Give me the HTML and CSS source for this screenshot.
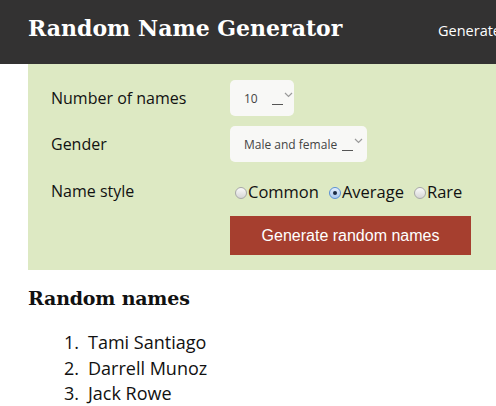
FILE: index.html
```html
<!DOCTYPE html>
<html>
<head>
<meta charset="utf-8">
<link rel="stylesheet" href="styles.css">
</head>
<body>
<header class="topbar">
  <div class="brand">Random Name Generator</div>
  <nav class="nav">Generate</nav>
</header>
<main class="content">
  <section class="panel">
    <div class="form">
      <div class="label">Number of names</div>
      <div class="field">
        <div class="select select-small"><span class="sel-text">10</span><span class="arrow"><span class="bar"></span><svg class="chev" width="9" height="6" viewBox="0 0 9 6"><path d="M1 1 L4.5 4.5 L8 1" fill="none" stroke="#9a9a9a" stroke-width="1.2"/></svg></span></div>
      </div>
      <div class="label">Gender</div>
      <div class="field">
        <div class="select select-wide"><span class="sel-text">Male and female</span><span class="arrow"><span class="bar"></span><svg class="chev" width="9" height="6" viewBox="0 0 9 6"><path d="M1 1 L4.5 4.5 L8 1" fill="none" stroke="#9a9a9a" stroke-width="1.2"/></svg></span></div>
      </div>
      <div class="label label-radio">Name style</div>
      <div class="field field-radio">
        <label class="radio"><span class="dot"></span>Common</label>
        <label class="radio"><span class="dot checked"></span>Average</label>
        <label class="radio"><span class="dot"></span>Rare</label>
      </div>
      <div></div>
      <div class="field"><button class="btn">Generate random names</button></div>
    </div>
  </section>
  <h2 class="results-title">Random names</h2>
  <ol class="names">
    <li>Tami Santiago</li>
    <li>Darrell Munoz</li>
    <li>Jack Rowe</li>
  </ol>
</main>
</body>
</html>
```
FILE: styles.css
```css
html, body { margin: 0; padding: 0; }
body {
  background: #fff;
  font-family: "Open Sans", "DejaVu Sans", sans-serif;
  color: #111;
  overflow: hidden;
  width: 496px;
}
.topbar {
  height: 64px;
  background: #333232;
  display: flex;
  align-items: center;
  padding-left: 28px;
  white-space: nowrap;
}
.brand {
  font-family: "DejaVu Serif", serif;
  font-weight: bold;
  font-size: 22px;
  color: #fff;
  letter-spacing: 0;
  width: 410px;
  flex-shrink: 0;
  margin-top: -9px;
}
.nav {
  font-family: "Open Sans", sans-serif;
  font-size: 14.5px;
  color: #fff;
  margin-top: -4px;
  flex-shrink: 0;
}
.content {
  padding-left: 28px;
}
.panel {
  background: #dde9c3;
  width: 520px;
  padding: 16px 0 15px 23px;
  box-sizing: border-box;
}
.form {
  display: grid;
  grid-template-columns: 179px 1fr;
  row-gap: 10px;
  align-items: center;
}
.label {
  font-size: 16px;
  color: #111;
}
.field { display: flex; align-items: center; }
.select {
  height: 36px;
  background: #f8f8f6;
  border-radius: 5px;
  display: flex;
  align-items: center;
  box-sizing: border-box;
  padding-left: 14px;
  font-size: 12px;
  color: #444;
}
.select-small { width: 64px; }
.select-wide { width: 137px; }
.arrow {
  display: flex;
  align-items: flex-start;
  margin-left: auto;
  margin-right: 4px;
  height: 20px;
}
.select-small .arrow { margin-left: 14px; }
.bar {
  display: block;
  width: 11px;
  height: 1px;
  background: #555;
  margin-top: 16px;
}
.chev { display: block; margin-top: 4px; margin-left: 1px; }
.field-radio { height: 38px; gap: 10px; font-size: 16.5px; padding-left: 5px; }
.label-radio { height: 38px; display: flex; align-items: center; }
.radio { display: flex; align-items: center; }
.dot {
  width: 12px;
  height: 12px;
  border-radius: 50%;
  border: 1px solid #a8a8a8;
  background: linear-gradient(#fafafa, #d6d6d6);
  margin: 3px 1px 0 0;
  box-sizing: border-box;
  position: relative;
}
.dot.checked {
  border-color: #5a8fd6;
  background: linear-gradient(#e3eefb, #a9c8ef);
}
.dot.checked::after {
  content: "";
  position: absolute;
  left: 3px; top: 3px;
  width: 4px; height: 4px;
  border-radius: 50%;
  background: #1a2a44;
}
.form > .field:last-child { margin-top: -4px; }
.btn {
  width: 241px;
  height: 39px;
  background: #a63f2f;
  color: #fff;
  border: none;
  font-family: "Liberation Sans", Arial, sans-serif;
  font-size: 16px;
  padding: 0;
}
.results-title {
  font-family: "DejaVu Serif", serif;
  font-weight: bold;
  font-size: 19px;
  margin: 17px 0 0 0;
  letter-spacing: -0.2px;
  color: #111;
}
.names {
  margin: 21px 0 0 0;
  padding-left: 60px;
  font-size: 18px;
  line-height: 25.5px;
  color: #111;
}
.names li::marker {
  content: counter(list-item) ".\2002";
}
```
